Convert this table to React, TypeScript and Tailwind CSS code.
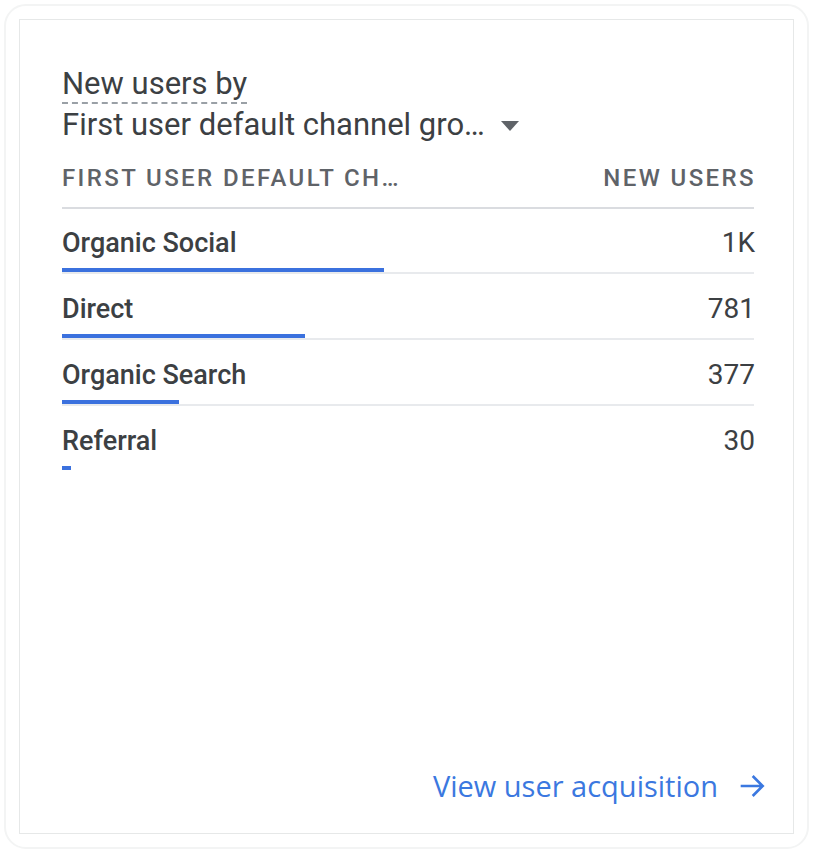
import React from "react";

const rows = [
  { label: "Organic Social", value: "1K", w: 322 },
  { label: "Direct", value: "781", w: 243 },
  { label: "Organic Search", value: "377", w: 117 },
  { label: "Referral", value: "30", w: 9 },
];

export default function App() {
  return (
    <div className="w-[813px] h-[853px] bg-white p-[4px]" style={{ fontFamily: "Roboto, 'Noto Sans', sans-serif" }}>
      <div className="w-full h-full rounded-[22px] border-2 border-[#f3f4f4] p-[13px]">
        <div className="w-full h-full border border-[#e6e8e8] bg-white flex flex-col pl-[42px] pr-[27px]">
          <div className="pr-[12px]">
            <div className="mt-[44px] text-[31px] leading-[40px] text-[#3c4043]">
              <span className="border-b-2 border-dashed border-[#9aa0a6]">New users by</span>
            </div>
            <div className="flex items-center text-[31px] leading-[42px] text-[#3c4043]">
              <span>First user default channel gro…</span>
              <svg width="20" height="12" viewBox="0 0 20 12" className="ml-[15px] mt-[1px]">
                <path d="M1 1 L19 1 L10 11 Z" fill="#5f6368" />
              </svg>
            </div>
            <div className="mt-[17px] flex justify-between text-[24px] leading-[30px] tracking-[2.4px] text-[#5f6368] font-medium pb-[14px] border-b-2 border-[#dadce0]">
              <span>FIRST USER DEFAULT CH…</span>
              <span className="mr-[-2px]">NEW USERS</span>
            </div>
            {rows.map((r) => (
              <div key={r.label} className="pt-[18px] pb-[1px]">
                <div className="flex justify-between items-center h-[32px] text-[#3c4043]">
                  <span className="font-medium text-[27px]">{r.label}</span>
                  <span className="text-[28px] mr-[-1px]">{r.value}</span>
                </div>
                <div className="mt-[9px] h-[4px] w-full">
                  <div className="h-[4px] bg-[#3b71de]" style={{ width: r.w }} />
                </div>
                <div className={r.label === "Referral" ? "h-[2px]" : "h-[2px] bg-[#e8eaed]"} />
              </div>
            ))}
          </div>
          <div className="flex-1" />
          <div className="flex justify-end items-center mb-[29px] text-[#3b78e0]">
            <span className="text-[29px] leading-[36px] mr-[1px]" style={{ fontFamily: "'Open Sans', Roboto, sans-serif" }}>View user acquisition</span>
            <svg width="32" height="32" viewBox="0 0 24 24" className="ml-[17px] mr-[-2px]">
              <path d="M3.5 12 H19.5 M12.5 4.5 L20 12 L12.5 19.5" fill="none" stroke="#3b78e0" strokeWidth="2" />
            </svg>
          </div>
        </div>
      </div>
    </div>
  );
}
